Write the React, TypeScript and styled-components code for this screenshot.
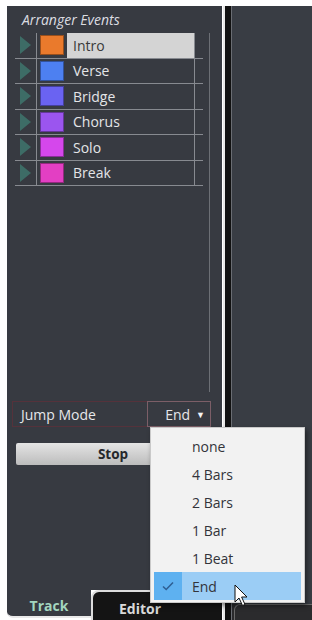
import React from "react";
import styled, { createGlobalStyle } from "styled-components";

const events = [
  { name: "Intro", color: "#ea7a2c", active: true },
  { name: "Verse", color: "#4d80f1" },
  { name: "Bridge", color: "#6a63f2" },
  { name: "Chorus", color: "#9b55ef" },
  { name: "Solo", color: "#d547ec" },
  { name: "Break", color: "#e33fc3" }
];

const modes = ["none", "4 Bars", "2 Bars", "1 Bar", "1 Beat", "End"];

export default function App() {
  return (
    <>
      <GlobalStyle />
      <Screen>
        <LeftPanel>
          <Title>Arranger Events</Title>

          <ListArea>
            <Table>
              {events.map((ev) => (
                <Row key={ev.name}>
                  <PlayCell>
                    <svg width="11" height="18" viewBox="0 0 11 18">
                      <polygon points="0,0 11,9 0,18" fill="#3d6c66" />
                    </svg>
                  </PlayCell>
                  <SwatchCell>
                    <Swatch $color={ev.color} />
                  </SwatchCell>
                  <NameCell $active={ev.active}>{ev.name}</NameCell>
                  <TailCell />
                </Row>
              ))}
            </Table>
            <ScrollLine />
          </ListArea>

          <JumpRow>
            <JumpLabel>Jump Mode</JumpLabel>
            <SelectBox>
              End
              <Caret>▼</Caret>
              <Menu>
                {modes.map((m) => (
                  <MenuItem key={m} $selected={m === "End"}>
                    <CheckCell $selected={m === "End"}>
                      {m === "End" && (
                        <svg width="12" height="10" viewBox="0 0 12 10">
                          <path
                            d="M1 5.5 L4.2 8.5 L11 1.5"
                            fill="none"
                            stroke="#2f5f93"
                            strokeWidth="1.6"
                          />
                        </svg>
                      )}
                    </CheckCell>
                    <ItemText>{m}</ItemText>
                  </MenuItem>
                ))}
              </Menu>
            </SelectBox>
          </JumpRow>

          <StopButton>Stop</StopButton>

          <Spacer />

          <TabBar>
            <TrackTab>Track</TrackTab>
            <EditorTab>Editor</EditorTab>
          </TabBar>
        </LeftPanel>

        <Divider />

        <RightPanel>
          <RightBody />
          <RightFoot />
        </RightPanel>

        <Cursor width="15" height="23" viewBox="0 0 15 23">
          <path
            d="M1 1 L1 18 L5 14 L8.5 21.5 L11 20.5 L7.6 13 L13 13 Z"
            fill="#fff"
            stroke="#111"
            strokeWidth="1"
          />
        </Cursor>
      </Screen>
    </>
  );
}

const GlobalStyle = createGlobalStyle`
  html, body {
    margin: 0;
    padding: 0;
    background: #fff;
  }
  * {
    box-sizing: border-box;
  }
`;

const Screen = styled.div`
  position: relative;
  width: 312px;
  height: 620px;
  padding: 6px 0 0 7px;
  display: flex;
  background: #fff;
  overflow: hidden;
  font-family: "Open Sans", "Noto Sans", sans-serif;
`;

const LeftPanel = styled.div`
  width: 215px;
  height: 614px;
  background: #373a41;
  display: flex;
  flex-direction: column;
`;

const Title = styled.div`
  height: 27px;
  padding: 6px 0 0 15px;
  font-size: 14px;
  line-height: 16px;
  font-style: italic;
  color: #dcdde1;
`;

const ListArea = styled.div`
  height: 359px;
  margin-left: 8px;
  display: flex;
`;

const Table = styled.div`
  width: 188px;
  display: flex;
  flex-direction: column;
  align-self: flex-start;
`;

const Row = styled.div`
  height: 25.5px;
  display: grid;
  grid-template-columns: 22px 30px 128px 8px;
  border-bottom: 1px solid #878a90;
`;

const PlayCell = styled.div`
  display: flex;
  align-items: center;
  padding-left: 5px;
  border-right: 1px solid #878a90;
`;

const SwatchCell = styled.div`
  display: flex;
  align-items: center;
  padding-left: 3px;
`;

const Swatch = styled.div<{ $color: string }>`
  width: 24px;
  height: 20px;
  background: ${(p) => p.$color};
  border: 1px solid rgba(0, 0, 0, 0.35);
`;

const NameCell = styled.div<{ $active?: boolean }>`
  display: flex;
  align-items: center;
  padding-left: 6px;
  font-size: 14px;
  color: ${(p) => (p.$active ? "#3a3a3a" : "#e4e5e8")};
  background: ${(p) => (p.$active ? "#d4d4d4" : "transparent")};
  border-right: 1px solid #878a90;
`;

const TailCell = styled.div``;

const ScrollLine = styled.div`
  width: 1px;
  margin-left: 6px;
  background: #6c6f75;
`;

const JumpRow = styled.div`
  margin: 9px 0 0 5px;
  width: 199px;
  height: 26px;
  display: flex;
  align-items: stretch;
  justify-content: space-between;
  border: 1px solid #55323b;
`;

const JumpLabel = styled.div`
  display: flex;
  align-items: center;
  padding-left: 8px;
  font-size: 14px;
  color: #e6e7ea;
`;

const SelectBox = styled.div`
  position: relative;
  width: 64px;
  margin: -1px -1px -1px 0;
  display: flex;
  align-items: center;
  justify-content: flex-end;
  padding-right: 5px;
  border: 1px solid #7c5e67;
  font-size: 14px;
  color: #e6e7ea;
`;

const Caret = styled.span`
  margin-left: 6px;
  font-size: 9px;
  color: #f4f4f4;
`;

const Menu = styled.div`
  position: absolute;
  top: calc(100% + 1px);
  left: 2px;
  width: 155px;
  padding: 4px 3px 2px;
  background: #f2f2f2;
  border: 1px solid #c9c9c9;
  box-shadow: 2px 3px 5px rgba(0, 0, 0, 0.45);
  z-index: 5;
`;

const MenuItem = styled.div<{ $selected?: boolean }>`
  height: 28px;
  display: grid;
  grid-template-columns: 28px 1fr;
  background: ${(p) => (p.$selected ? "#9bcdf5" : "transparent")};
`;

const CheckCell = styled.div<{ $selected?: boolean }>`
  display: flex;
  align-items: center;
  justify-content: center;
  background: ${(p) => (p.$selected ? "#5eb1f0" : "transparent")};
`;

const ItemText = styled.div`
  display: flex;
  align-items: center;
  padding-left: 10px;
  font-size: 14px;
  color: #33343a;
`;

const StopButton = styled.div`
  margin: 16px 0 0 9px;
  width: 194px;
  height: 22px;
  display: flex;
  align-items: center;
  justify-content: center;
  background: linear-gradient(#e4e4e4, #bcbcbc);
  border-radius: 2px;
  font-size: 13.5px;
  font-weight: 700;
  color: #26272b;
`;

const Spacer = styled.div`
  flex: 1;
`;

const TabBar = styled.div`
  height: 30px;
  display: flex;
  background: #fff;
`;

const TrackTab = styled.div`
  width: 84px;
  height: 28px;
  display: flex;
  align-items: center;
  justify-content: center;
  padding-top: 5px;
  background: #373a41;
  border-bottom: 2px solid #e9e9e9;
  border-bottom-left-radius: 6px;
  font-size: 14px;
  font-weight: 700;
  color: #a3d6bf;
`;

const EditorTab = styled.div`
  flex: 1;
  display: flex;
  align-items: center;
  padding: 4px 0 0 26px;
  background: #141414;
  border-top: 2px solid #dcdcdc;
  border-left: 2px solid #dcdcdc;
  border-top-left-radius: 8px;
  font-size: 14px;
  font-weight: 700;
  color: #d9d9d9;
`;

const Divider = styled.div`
  width: 9px;
  height: 614px;
  margin-left: 1px;
  background: #111;
  border-left: 2px solid #e8e8e8;
  border-right: 1px solid #6a6d73;
`;

const RightPanel = styled.div`
  flex: 1;
  height: 614px;
  display: flex;
  flex-direction: column;
  background: #2a2a2c;
`;

const RightBody = styled.div`
  flex: 1;
  background: #393d44;
`;

const RightFoot = styled.div`
  height: 16px;
  margin-left: 2px;
  border-top: 1px solid #6a6a6a;
  border-left: 1px solid #6a6a6a;
  border-top-left-radius: 6px;
  background: #2b2b2d;
`;

const Cursor = styled.svg`
  position: absolute;
  left: 234px;
  top: 584px;
  z-index: 6;
`;
